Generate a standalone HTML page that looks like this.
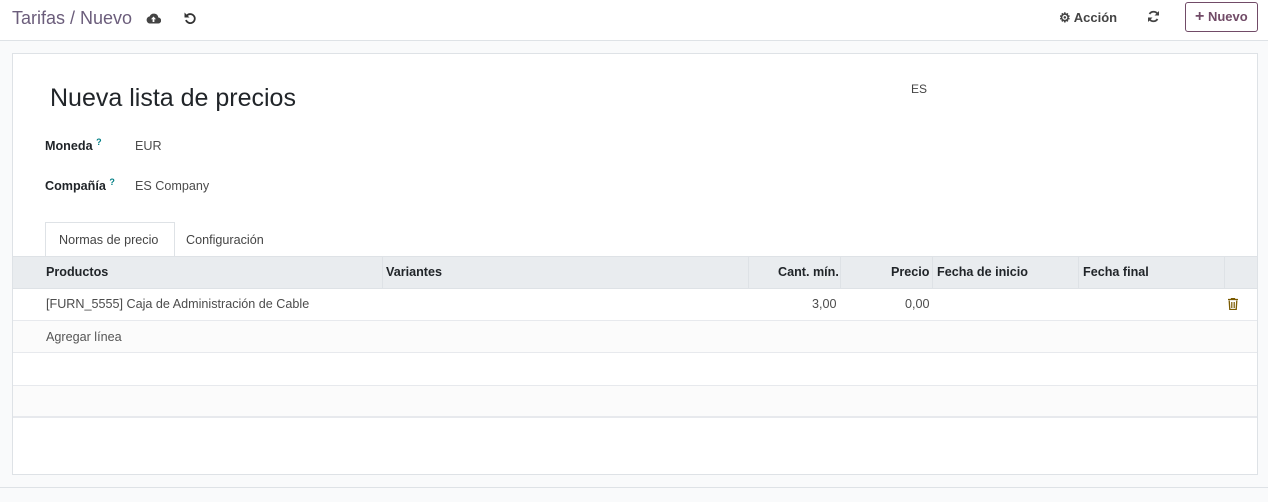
<!DOCTYPE html><html><head><meta charset="utf-8"><style>
*{box-sizing:border-box;margin:0;padding:0}
body{width:1268px;height:502px;background:#f9fafb;font-family:"Liberation Sans",sans-serif;font-size:12.6px;color:#4c4c4c;position:relative;overflow:hidden}
.top{position:absolute;left:0;top:0;width:1268px;height:41px;background:#fff;border-bottom:1px solid #dee2e6}
.abs{position:absolute;white-space:nowrap}
.sheet{position:absolute;left:12px;top:53px;width:1246px;height:422px;background:#fff;border:1px solid #dee2e6}
.bot{position:absolute;left:0;top:487px;width:1268px;height:1px;background:#dee2e6}
.row{position:absolute;left:0;width:1244px;border-bottom:1px solid #e7e9ed}
.hd{font-weight:bold;color:#212529}
</style></head><body>
<div class="top">
<div class="abs" style="left:12px;top:8px;font-size:18px;color:#6b5d7b">Tarifas / Nuevo</div>
<svg class="abs" style="left:146px;top:12px" width="15" height="12" viewBox="0 0 15 12"><path d="M3.5 11.5h8.5a3 3 0 0 0 .3-6A4.5 4.5 0 0 0 3.7 4.4 3.6 3.6 0 0 0 3.5 11.5z" fill="#444"/><path d="M7.5 4.5l-2.5 2.8h1.6v2.7h1.8V7.3H10z" fill="#fff"/></svg>
<svg class="abs" style="left:184px;top:11px" width="13" height="14" viewBox="0 0 13 14"><path d="M3 4.5A4.5 4.5 0 1 1 2 9" fill="none" stroke="#333" stroke-width="1.8"/><path d="M0.5 1.5v5h5z" fill="#333"/></svg>
<div class="abs" style="left:1059px;top:10px;font-size:13px;color:#444;font-weight:bold">⚙ Acción</div>
<svg class="abs" style="left:1147px;top:10px" width="13" height="13" viewBox="0 0 13 13"><path d="M11 5A4.7 4.7 0 0 0 2.5 4M2 8A4.7 4.7 0 0 0 10.5 9" fill="none" stroke="#444" stroke-width="1.8"/><path d="M12 1v4.5H7.5zM1 12V7.5h4.5z" fill="#444"/></svg>
<div class="abs" style="left:1185px;top:2px;width:73px;height:30px;border:1px solid #714b67;border-radius:3px;color:#714b67;font-size:13px;font-weight:bold;line-height:28px;padding-left:9px"><span style="font-size:16px">+</span> Nuevo</div>
</div>
<div class="sheet">
<div class="abs" style="left:37px;top:30px;font-size:25px;color:#212529">Nueva lista de precios</div>
<div class="abs" style="left:898px;top:28px;font-size:12px;color:#444">ES</div>
<div class="abs" style="left:32px;top:83px;font-weight:bold;color:#212529">Moneda <sup style="color:#017e84;font-size:9px">?</sup></div>
<div class="abs" style="left:122px;top:85px">EUR</div>
<div class="abs" style="left:32px;top:123px;font-weight:bold;color:#212529">Compañía <sup style="color:#017e84;font-size:9px">?</sup></div>
<div class="abs" style="left:122px;top:125px">ES Company</div>
<div class="abs" style="left:32px;top:168px;width:130px;height:35px;border:1px solid #dee2e6;border-bottom:none;background:#fff;padding:10px 0 0 13px;color:#444">Normas de precio</div>
<div class="abs" style="left:173px;top:179px;color:#444">Configuración</div>
<div class="row" style="top:202px;height:33px;background:#e9ecef;border-top:1px solid #dee2e6;border-bottom:1px solid #dee2e6"></div>
<div class="abs" style="left:369px;top:203px;width:1px;height:31px;background:#dee2e6"></div>
<div class="abs" style="left:735px;top:203px;width:1px;height:31px;background:#dee2e6"></div>
<div class="abs" style="left:827px;top:203px;width:1px;height:31px;background:#dee2e6"></div>
<div class="abs" style="left:919px;top:203px;width:1px;height:31px;background:#dee2e6"></div>
<div class="abs" style="left:1065px;top:203px;width:1px;height:31px;background:#dee2e6"></div>
<div class="abs" style="left:1211px;top:203px;width:1px;height:31px;background:#dee2e6"></div>
<div class="abs hd" style="left:33px;top:211px">Productos</div>
<div class="abs hd" style="left:373px;top:211px">Variantes</div>
<div class="abs hd" style="left:765px;top:211px">Cant. mín.</div>
<div class="abs hd" style="left:878px;top:211px">Precio</div>
<div class="abs hd" style="left:924px;top:211px">Fecha de inicio</div>
<div class="abs hd" style="left:1070px;top:211px">Fecha final</div>
<div class="row" style="top:235px;height:32px;background:#fff"></div>
<div class="abs" style="left:33px;top:243px">[FURN_5555] Caja de Administración de Cable</div>
<div class="abs" style="left:799px;top:243px">3,00</div>
<div class="abs" style="left:892px;top:243px">0,00</div>
<svg class="abs" style="left:1215px;top:244px" width="10" height="12" viewBox="0 0 10 12"><path d="M0 1.5h10M3.5 1.5V.5h3v1M1.2 2.5l.6 9h6.4l.6-9" fill="none" stroke="#7a5a00" stroke-width="1.3"/><path d="M3.5 4v6M5 4v6M6.5 4v6" stroke="#7a5a00" stroke-width=".8"/></svg>
<div class="row" style="top:267px;height:32px;background:#fbfbfb"></div>
<div class="abs" style="left:33px;top:276px;color:#555">Agregar línea</div>
<div class="row" style="top:299px;height:33px;background:#fff"></div>
<div class="row" style="top:332px;height:32px;background:#fbfbfb;border-bottom:2px solid #e7e9ed"></div>
</div>
<div class="bot"></div>
</body></html>
